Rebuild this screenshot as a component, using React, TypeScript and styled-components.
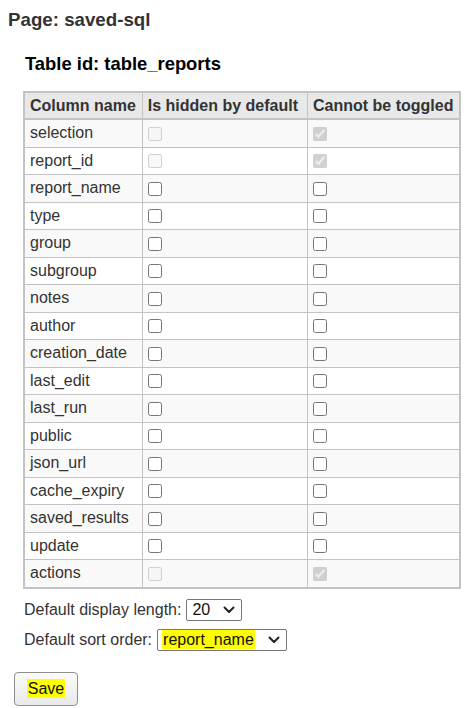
import React from "react";
import styled, { createGlobalStyle } from "styled-components";

const GlobalStyle = createGlobalStyle`
  html, body {
    margin: 0;
    padding: 0;
    background: #ffffff;
    font-family: "Liberation Sans", Arial, sans-serif;
    color: #333333;
  }
`;

const Page = styled.div`
  padding: 9px 8px 0 8px;
`;

const PageTitle = styled.h3`
  margin: 0;
  font-size: 18.72px;
  line-height: 21.5px;
  font-weight: bold;
  color: #333333;
`;

const Section = styled.section`
  margin-top: 22.5px;
  padding-left: 15px;
`;

const TableTitle = styled.h4`
  margin: 0 0 16.7px 2px;
  font-size: 18.4px;
  line-height: 21.3px;
  font-weight: bold;
  color: #000000;
`;

const Table = styled.table`
  border-collapse: collapse;
  border: 2px solid #c3c3c3;
  font-size: 16px;
  line-height: 18.4px;
`;

const HeadCell = styled.th<{ $padRight: number }>`
  background: #e8e8e8;
  border: 1px solid #c3c3c3;
  border-bottom: 2px solid #c3c3c3;
  padding: 4px ${(p) => p.$padRight}px 3px 5px;
  text-align: left;
  font-weight: bold;
  color: #333333;
  white-space: nowrap;
`;

const Row = styled.tr<{ $odd: boolean }>`
  background: ${(p) => (p.$odd ? "#f9f9f9" : "#ffffff")};
`;

const Cell = styled.td`
  border: 1px solid #c3c3c3;
  padding: 4.1px 5px 4px 5px;
  color: #333333;
  white-space: nowrap;
  vertical-align: middle;
`;

const Check = styled.input`
  display: block;
  margin: 0;
  width: 14px;
  height: 14px;
`;

const FormRow = styled.div<{ $gap: number }>`
  display: flex;
  align-items: center;
  gap: 5px;
  margin-top: ${(p) => p.$gap}px;
  margin-left: 1px;
  height: 22px;
  font-size: 16px;
  color: #333333;
`;

const SelectBox = styled.div<{ $width: number }>`
  box-sizing: border-box;
  width: ${(p) => p.$width}px;
  height: 22px;
  border: 1px solid #767676;
  border-radius: 2px;
  background: #ffffff;
  display: flex;
  align-items: center;
  justify-content: space-between;
  padding: 0 6px 0 4px;
  font-size: 16px;
  color: #111111;
`;

const Mark = styled.span`
  background: #ffff00;
  color: #111111;
  padding: 0 1px;
  line-height: 19px;
`;

const Plain = styled.span`
  padding: 0 1px;
`;

const SaveButton = styled.button`
  margin: 21px 0 0 6px;
  box-sizing: border-box;
  width: 64px;
  height: 34px;
  border: 1px solid #8f8f8f;
  border-radius: 4px;
  background: linear-gradient(#fbfbfb, #e9e9e9);
  font-family: "Liberation Sans", Arial, sans-serif;
  font-size: 16px;
  color: #111111;
  padding: 0;
  display: flex;
  align-items: center;
  justify-content: center;
`;

const Chevron = () => (
  <svg width="12" height="8" viewBox="0 0 12 8">
    <polyline
      points="1.5,1.5 6,6 10.5,1.5"
      fill="none"
      stroke="#222"
      strokeWidth="2"
      strokeLinecap="round"
      strokeLinejoin="round"
    />
  </svg>
);

type Col = { name: string; locked?: boolean };

const columns: Col[] = [
  { name: "selection", locked: true },
  { name: "report_id", locked: true },
  { name: "report_name" },
  { name: "type" },
  { name: "group" },
  { name: "subgroup" },
  { name: "notes" },
  { name: "author" },
  { name: "creation_date" },
  { name: "last_edit" },
  { name: "last_run" },
  { name: "public" },
  { name: "json_url" },
  { name: "cache_expiry" },
  { name: "saved_results" },
  { name: "update" },
  { name: "actions", locked: true },
];

export default function App() {
  return (
    <>
      <GlobalStyle />
      <Page>
        <PageTitle>Page: saved-sql</PageTitle>
        <Section>
          <TableTitle>Table id: table_reports</TableTitle>
          <Table>
            <thead>
              <tr>
                <HeadCell $padRight={6}>Column name</HeadCell>
                <HeadCell $padRight={9}>Is hidden by default</HeadCell>
                <HeadCell $padRight={6}>Cannot be toggled</HeadCell>
              </tr>
            </thead>
            <tbody>
              {columns.map((c, i) => (
                <Row key={c.name} $odd={i % 2 === 0}>
                  <Cell>{c.name}</Cell>
                  <Cell>
                    <Check type="checkbox" disabled={c.locked} defaultChecked={false} />
                  </Cell>
                  <Cell>
                    <Check type="checkbox" disabled={c.locked} defaultChecked={!!c.locked} />
                  </Cell>
                </Row>
              ))}
            </tbody>
          </Table>
          <FormRow $gap={10}>
            <span>Default display length:</span>
            <SelectBox $width={56}>
              <Plain>20</Plain>
              <Chevron />
            </SelectBox>
          </FormRow>
          <FormRow $gap={8}>
            <span>Default sort order:</span>
            <SelectBox $width={130}>
              <Mark>report_name</Mark>
              <Chevron />
            </SelectBox>
          </FormRow>
        </Section>
        <SaveButton type="button">
          <Mark>Save</Mark>
        </SaveButton>
      </Page>
    </>
  );
}
